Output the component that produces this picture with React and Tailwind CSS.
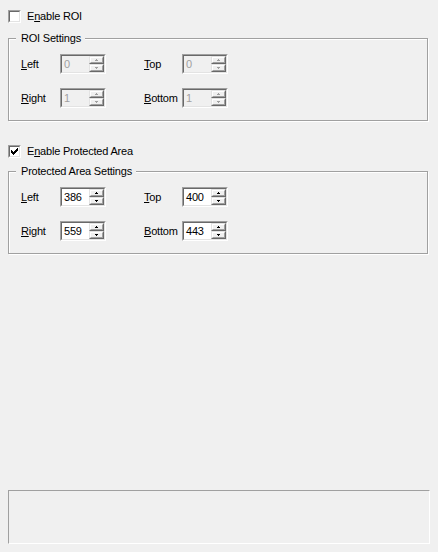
import React from "react";

function Accel({ children }) {
  return <span className="underline underline-offset-[1px]">{children}</span>;
}

function CheckBox({ checked }) {
  return (
    <div className="h-[13px] w-[13px] border border-t-[#a0a0a0] border-l-[#a0a0a0] border-b-white border-r-white">
      <div className="h-full w-full border border-t-[#696969] border-l-[#696969] border-b-[#e3e3e3] border-r-[#e3e3e3] bg-white p-[1px]">
        {checked && (
          <svg width="7" height="7" viewBox="0 0 7 7" shapeRendering="crispEdges">
            <rect x="0" y="2" width="1" height="3" fill="#000" />
            <rect x="1" y="3" width="1" height="3" fill="#000" />
            <rect x="2" y="4" width="1" height="3" fill="#000" />
            <rect x="3" y="3" width="1" height="3" fill="#000" />
            <rect x="4" y="2" width="1" height="3" fill="#000" />
            <rect x="5" y="1" width="1" height="3" fill="#000" />
            <rect x="6" y="0" width="1" height="3" fill="#000" />
          </svg>
        )}
      </div>
    </div>
  );
}

function SpinBtn({ up, disabled }) {
  const c = disabled ? "#a0a0a0" : "#000";
  return (
    <div className="h-[8px] w-full border border-t-[#e3e3e3] border-l-[#e3e3e3] border-b-[#696969] border-r-[#696969]">
      <div className="flex h-full w-full items-center justify-center border border-t-white border-l-white border-b-[#a0a0a0] border-r-[#a0a0a0] bg-[#f0f0f0]">
        <svg width="3" height="2" viewBox="0 0 3 2" shapeRendering="crispEdges">
          {up ? (
            <>
              <rect x="1" y="0" width="1" height="1" fill={c} />
              <rect x="0" y="1" width="3" height="1" fill={c} />
            </>
          ) : (
            <>
              <rect x="0" y="0" width="3" height="1" fill={c} />
              <rect x="1" y="1" width="1" height="1" fill={c} />
            </>
          )}
        </svg>
      </div>
    </div>
  );
}

function SpinEdit({ value, disabled }) {
  return (
    <div className="flex h-[20px] w-[46px] border border-t-[#a0a0a0] border-l-[#a0a0a0] border-b-white border-r-white">
      <div
        className={`flex flex-1 border border-t-[#696969] border-l-[#696969] border-b-[#e3e3e3] border-r-[#e3e3e3] ${
          disabled ? "bg-[#f0f0f0]" : "bg-white"
        }`}
      >
        <div className={`flex-1 pl-[2px] leading-[16px] ${disabled ? "text-[#a0a0a0]" : "text-black"}`}>
          {value}
        </div>
        <div className="flex w-[15px] flex-col">
          <SpinBtn up disabled={disabled} />
          <SpinBtn disabled={disabled} />
        </div>
      </div>
    </div>
  );
}

function GroupBox({ title, disabled, values }) {
  return (
    <div className="ml-[8px] w-[420px] border border-[#a0a0a0] pb-[12px] pl-[12px] shadow-[inset_1px_1px_0_#fff,1px_1px_0_#fff]">
      <div className="-mt-[7px] ml-[-5px] w-fit bg-[#f0f0f0] pl-[5px] pr-[4px] leading-[13px]">{title}</div>
      <div className="mt-[9px] flex items-center">
        <div className="w-[39px]">
          <Accel>L</Accel>eft
        </div>
        <SpinEdit value={values[0]} disabled={disabled} />
        <div className="ml-[38px] w-[38px]">
          <Accel>T</Accel>op
        </div>
        <SpinEdit value={values[1]} disabled={disabled} />
      </div>
      <div className="mt-[14px] flex items-center">
        <div className="w-[39px]">
          <Accel>R</Accel>ight
        </div>
        <SpinEdit value={values[2]} disabled={disabled} />
        <div className="ml-[38px] w-[38px]">
          <Accel>B</Accel>ottom
        </div>
        <SpinEdit value={values[3]} disabled={disabled} />
      </div>
    </div>
  );
}

export default function App() {
  return (
    <div className="h-[552px] w-[438px] overflow-hidden bg-[#f0f0f0] font-['Liberation_Sans',Arial,sans-serif] text-[11px] tracking-[-0.2px] text-black">
      {/* ROI */}
      <div className="ml-[8px] mt-[10px] flex h-[13px] items-center gap-[6px]">
        <CheckBox />
        <span>
          E<Accel>n</Accel>able ROI
        </span>
      </div>
      <div className="mt-[15px]">
        <GroupBox title="ROI Settings" disabled values={["0", "0", "1", "1"]} />
      </div>

      {/* Protected area */}
      <div className="ml-[8px] mt-[24px] flex h-[13px] items-center gap-[6px]">
        <CheckBox checked />
        <span>
          E<Accel>n</Accel>able Protected Area
        </span>
      </div>
      <div className="mt-[13px]">
        <GroupBox title="Protected Area Settings" values={["386", "400", "559", "443"]} />
      </div>

      {/* status box */}
      <div className="ml-[8px] mt-[236px] h-[54px] w-[422px] border border-t-[#a0a0a0] border-l-[#a0a0a0] border-b-white border-r-white" />
    </div>
  );
}
